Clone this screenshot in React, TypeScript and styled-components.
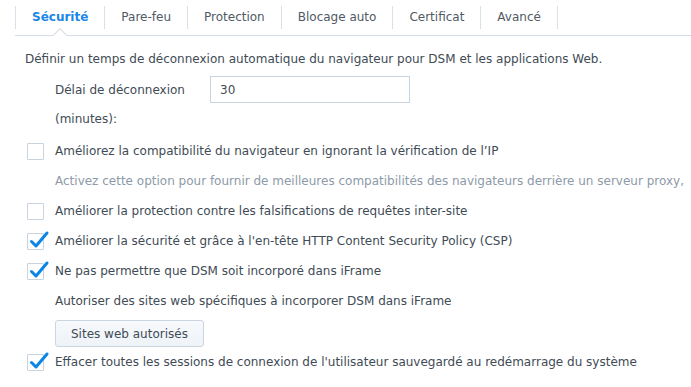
import React from "react";
import styled, { createGlobalStyle } from "styled-components";

const Global = createGlobalStyle`
  html, body { margin: 0; padding: 0; background: #ffffff; }
  body {
    font-family: "DejaVu Sans", Verdana, sans-serif;
    font-size: 12px;
    color: #414b55;
    overflow: hidden;
  }
`;

const Page = styled.div`
  width: 691px;
  height: 387px;
  overflow: hidden;
  background: #ffffff;
`;

const TabBar = styled.nav`
  display: flex;
  align-items: center;
  height: 36px;
  margin-left: 15px;
  border-bottom: 1px solid #d6dde5;
  box-sizing: border-box;
`;

const Separator = styled.span`
  width: 1px;
  height: 23px;
  margin-bottom: 1px;
  background: #d8e0e8;
  flex: none;
`;

const Tab = styled.div<{ $active?: boolean }>`
  position: relative;
  height: 100%;
  display: flex;
  align-items: center;
  padding: 0 16px 1px;
  box-sizing: border-box;
  white-space: nowrap;
  color: ${(p) => (p.$active ? "#1a87e6" : "#505a64")};
  font-weight: ${(p) => (p.$active ? 700 : 400)};
  ${(p) =>
    p.$active &&
    `
    &::after {
      content: "";
      position: absolute;
      left: 50%;
      bottom: -1px;
      width: 9px;
      height: 9px;
      background: #ffffff;
      border-left: 1px solid #d6dde5;
      border-top: 1px solid #d6dde5;
      transform: translate(-50%, 50%) rotate(45deg);
      transform-origin: center;
      margin-bottom: 1px;
    }
  `}
`;

const Content = styled.div`
  padding: 8px 0 0 25px;
  white-space: nowrap;
`;

const Line = styled.div<{ $indent?: boolean; $muted?: boolean }>`
  height: 30px;
  display: flex;
  align-items: center;
  padding-left: ${(p) => (p.$indent ? "30px" : "0")};
  color: ${(p) => (p.$muted ? "#8d9aa7" : "#414b55")};
`;

const FieldRow = styled.div`
  display: grid;
  grid-template-columns: 155px 200px;
  padding-left: 30px;
  margin: 2px 0 2px;
`;

const FieldLabel = styled.label`
  line-height: 29px;
  white-space: normal;
  width: 140px;
`;

const Input = styled.input`
  box-sizing: border-box;
  height: 27px;
  width: 200px;
  margin-top: 0;
  border: 1px solid #c7d3df;
  border-radius: 0;
  padding: 0 9px;
  font: inherit;
  color: #414b55;
  outline: none;
`;

const CheckRow = styled.label`
  height: 30px;
  display: flex;
  align-items: center;
  gap: 11px;
  padding-left: 2px;
`;

const Box = styled.span`
  position: relative;
  width: 17px;
  height: 17px;
  box-sizing: border-box;
  border: 1px solid #c8d3de;
  border-radius: 1px;
  background: #ffffff;
  flex: none;
`;

const Tick = styled.svg`
  position: absolute;
  left: 1px;
  top: -3px;
  overflow: visible;
`;

const ButtonRow = styled.div`
  height: 31px;
  box-sizing: border-box;
  display: flex;
  align-items: flex-start;
  padding: 4px 0 0 30px;
`;

const Button = styled.button`
  box-sizing: border-box;
  height: 27px;
  padding: 0 15px;
  border: 1px solid #c9d5e1;
  border-radius: 3px;
  background: linear-gradient(#f7f9fc, #eef3f8);
  font: inherit;
  color: #414b55;
  cursor: pointer;
`;

function Checkbox({ checked }: { checked?: boolean }) {
  return (
    <Box>
      {checked && (
        <Tick width="19" height="17" viewBox="0 0 19 17">
          <path
            d="M2.5 10.5 L7 15 L18 2"
            fill="none"
            stroke="#0a86e4"
            strokeWidth="3"
            strokeLinecap="round"
            strokeLinejoin="round"
          />
        </Tick>
      )}
    </Box>
  );
}

const tabs = ["Sécurité", "Pare-feu", "Protection", "Blocage auto", "Certificat", "Avancé"];

export default function App() {
  return (
    <Page>
      <Global />
      <TabBar>
        <Separator />
        {tabs.map((t, i) => (
          <React.Fragment key={t}>
            <Tab $active={i === 0}>{t}</Tab>
            <Separator />
          </React.Fragment>
        ))}
      </TabBar>
      <Content>
        <Line>Définir un temps de déconnexion automatique du navigateur pour DSM et les applications Web.</Line>
        <FieldRow>
          <FieldLabel>Délai de déconnexion (minutes):</FieldLabel>
          <Input defaultValue="30" />
        </FieldRow>
        <CheckRow>
          <Checkbox />
          <span>Améliorez la compatibilité du navigateur en ignorant la vérification de l’IP</span>
        </CheckRow>
        <Line $indent $muted>
          Activez cette option pour fournir de meilleures compatibilités des navigateurs derrière un serveur proxy,
        </Line>
        <CheckRow>
          <Checkbox />
          <span>Améliorer la protection contre les falsifications de requêtes inter-site</span>
        </CheckRow>
        <CheckRow>
          <Checkbox checked />
          <span>Améliorer la sécurité et grâce à l'en-tête HTTP Content Security Policy (CSP)</span>
        </CheckRow>
        <CheckRow>
          <Checkbox checked />
          <span>Ne pas permettre que DSM soit incorporé dans iFrame</span>
        </CheckRow>
        <Line $indent>Autoriser des sites web spécifiques à incorporer DSM dans iFrame</Line>
        <ButtonRow>
          <Button>Sites web autorisés</Button>
        </ButtonRow>
        <CheckRow>
          <Checkbox checked />
          <span>Effacer toutes les sessions de connexion de l'utilisateur sauvegardé au redémarrage du système</span>
        </CheckRow>
      </Content>
    </Page>
  );
}
